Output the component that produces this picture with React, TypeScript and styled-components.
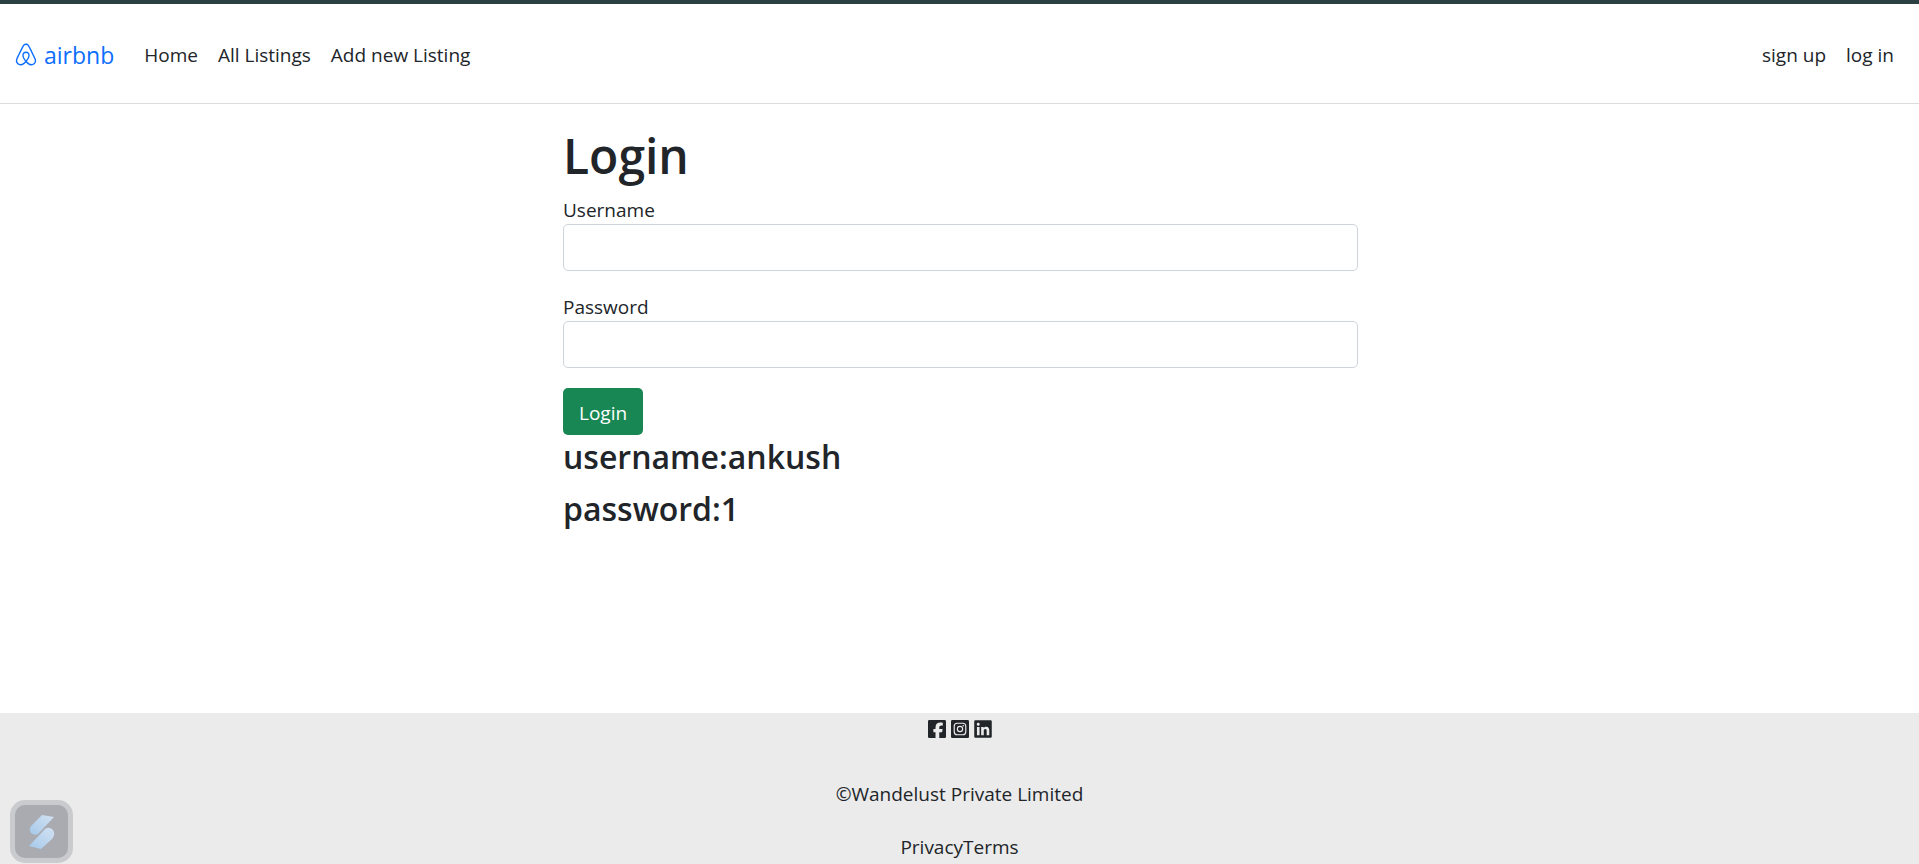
import React from "react";
import styled, { createGlobalStyle } from "styled-components";
import { FaAirbnb, FaLinkedin } from "react-icons/fa6";

const GlobalStyle = createGlobalStyle`
  *, *::before, *::after { box-sizing: border-box; }
  body {
    margin: 0;
    background: #fff;
    color: #212529;
    font-family: "Segoe UI", "Open Sans", "Noto Sans", sans-serif;
    font-size: 19px;
    line-height: 30px;
  }
`;

const Page = styled.div`
  display: flex;
  flex-direction: column;
  min-height: 100vh;
  border-top: 4px solid #2a4043;
`;

const Navbar = styled.nav`
  display: flex;
  align-items: center;
  height: 100px;
  padding: 2px 15px 0;
  border-bottom: 1px solid #dcdcdc;
`;

const Brand = styled.a`
  display: flex;
  align-items: center;
  gap: 7px;
  margin-right: 20px;
  color: #0d6efd;
  font-size: 23px;
  text-decoration: none;
`;

const BrandIcon = styled(FaAirbnb)`
  width: 22px;
  height: 25px;
`;

const NavGroup = styled.div<{ $end?: boolean }>`
  display: flex;
  margin-left: ${(p) => (p.$end ? "auto" : "0")};
`;

const NavLink = styled.a`
  padding: 0 10px;
  color: #212529;
  text-decoration: none;
`;

const Main = styled.main`
  display: grid;
  grid-template-columns: repeat(4, 1fr);
  flex: 1;
  width: 100%;
  max-width: 1650px;
  margin: 0 auto;
  padding-top: 20px;
`;

const Column = styled.div`
  grid-column: 2 / span 2;
  padding: 0 14px 0 16px;
`;

const Title = styled.h1`
  margin: 0 0 6px;
  font-size: 48px;
  font-weight: 600;
  line-height: 64px;
`;

const Hint = styled.h3`
  margin: 0 0 8px;
  font-size: 32px;
  font-weight: 600;
  line-height: 44px;
`;

const Field = styled.div`
  display: flex;
  flex-direction: column;
  margin-bottom: 20px;
`;

const Label = styled.label`
  height: 30px;
  line-height: 32px;
`;

const Input = styled.input`
  height: 47px;
  padding: 0 15px;
  border: 1px solid #ced4da;
  border-radius: 5px;
  background: #fff;
  color: inherit;
  font: inherit;
`;

const SubmitButton = styled.button`
  display: block;
  height: 47px;
  padding: 2px 16px 0;
  border: 0;
  border-radius: 5px;
  background: #198754;
  color: #fff;
  font: inherit;
`;

const Footer = styled.footer`
  display: flex;
  flex-direction: column;
  align-items: center;
  height: 151px;
  padding-top: 1px;
  background: #ebebeb;
`;

const Socials = styled.div`
  display: flex;
  align-items: center;
  gap: 5px;
  height: 30px;
  margin-bottom: 35px;
`;

const SocialLink = styled.a`
  display: flex;
  justify-content: center;
  width: 18px;
  color: #212529;
`;

const Copyright = styled.div`
  margin-bottom: 23px;
`;

const Legal = styled.div`
  display: flex;
`;

const LegalLink = styled.a`
  color: #212529;
  text-decoration: none;
`;

const Launcher = styled.button`
  position: fixed;
  bottom: 1px;
  left: 10px;
  display: flex;
  align-items: center;
  justify-content: center;
  width: 63px;
  height: 63px;
  padding: 0;
  border: 5px solid #cacbcf;
  border-radius: 15px;
  background: #a9abb0;
`;

const FacebookIcon = () => (
  <svg width="18" height="18" viewBox="0 32 448 448" aria-hidden="true">
    <rect y="32" width="448" height="448" rx="34" fill="#212529" />
    <path
      d="M187.200 480V334.700H134.400V256h52.800v-33.700c0-87.100 39.400-127.500 125-127.500 16.200 0 44.200 3.200 55.700 6.400V172c-6-.6-16.500-1-29.600-1-42 0-58.200 15.900-58.200 57.200V256h83.600l-14.400 78.700H280V480Z"
      fill="#ebebeb"
    />
  </svg>
);

const InstagramIcon = () => (
  <svg width="18" height="18" viewBox="0 0 448 448" aria-hidden="true">
    <rect width="448" height="448" rx="34" fill="#212529" />
    <rect x="80" y="80" width="288" height="288" rx="76" fill="none" stroke="#ebebeb" strokeWidth="29" />
    <circle cx="224" cy="224" r="66" fill="none" stroke="#ebebeb" strokeWidth="28" />
    <circle cx="305" cy="143" r="19" fill="#ebebeb" />
  </svg>
);

export default function App() {
  return (
    <>
      <GlobalStyle />
      <Page>
        <Navbar>
          <Brand href="#">
            <BrandIcon />
            airbnb
          </Brand>
          <NavGroup>
            <NavLink href="#">Home</NavLink>
            <NavLink href="#">All Listings</NavLink>
            <NavLink href="#">Add new Listing</NavLink>
          </NavGroup>
          <NavGroup $end>
            <NavLink href="#">sign up</NavLink>
            <NavLink href="#">log in</NavLink>
          </NavGroup>
        </Navbar>
        <Main>
          <Column>
            <Title>Login</Title>
            <form onSubmit={(e) => e.preventDefault()}>
              <Field>
                <Label htmlFor="username">Username</Label>
                <Input id="username" name="username" type="text" />
              </Field>
              <Field>
                <Label htmlFor="password">Password</Label>
                <Input id="password" name="password" type="password" />
              </Field>
              <SubmitButton type="submit">Login</SubmitButton>
            </form>
            <Hint>username:ankush</Hint>
            <Hint>password:1</Hint>
          </Column>
        </Main>
        <Footer>
          <Socials>
            <SocialLink href="#" aria-label="Facebook"><FacebookIcon /></SocialLink>
            <SocialLink href="#" aria-label="Instagram"><InstagramIcon /></SocialLink>
            <SocialLink href="#" aria-label="LinkedIn"><FaLinkedin size={20} /></SocialLink>
          </Socials>
          <Copyright>©Wandelust Private Limited</Copyright>
          <Legal>
            <LegalLink href="#">Privacy</LegalLink>
            <LegalLink href="#">Terms</LegalLink>
          </Legal>
        </Footer>
      </Page>
      <Launcher type="button" aria-label="Open assistant">
        <svg width="28" height="36" viewBox="0 0 28 36" aria-hidden="true">
          <defs>
            <linearGradient id="blade" x1="0" y1="1" x2="1" y2="0">
              <stop offset="0" stopColor="#a5c8ea" />
              <stop offset="1" stopColor="#d3e2f2" />
            </linearGradient>
          </defs>
          <path d="M14 1 L26 3 L10 20 Q6 22 3 19 Q0 15 4 11 Z" fill="url(#blade)" />
          <path d="M13 35 L1 32 L17 15 Q21 12 25 16 Q28 20 24 25 Z" fill="url(#blade)" />
        </svg>
      </Launcher>
    </>
  );
}
